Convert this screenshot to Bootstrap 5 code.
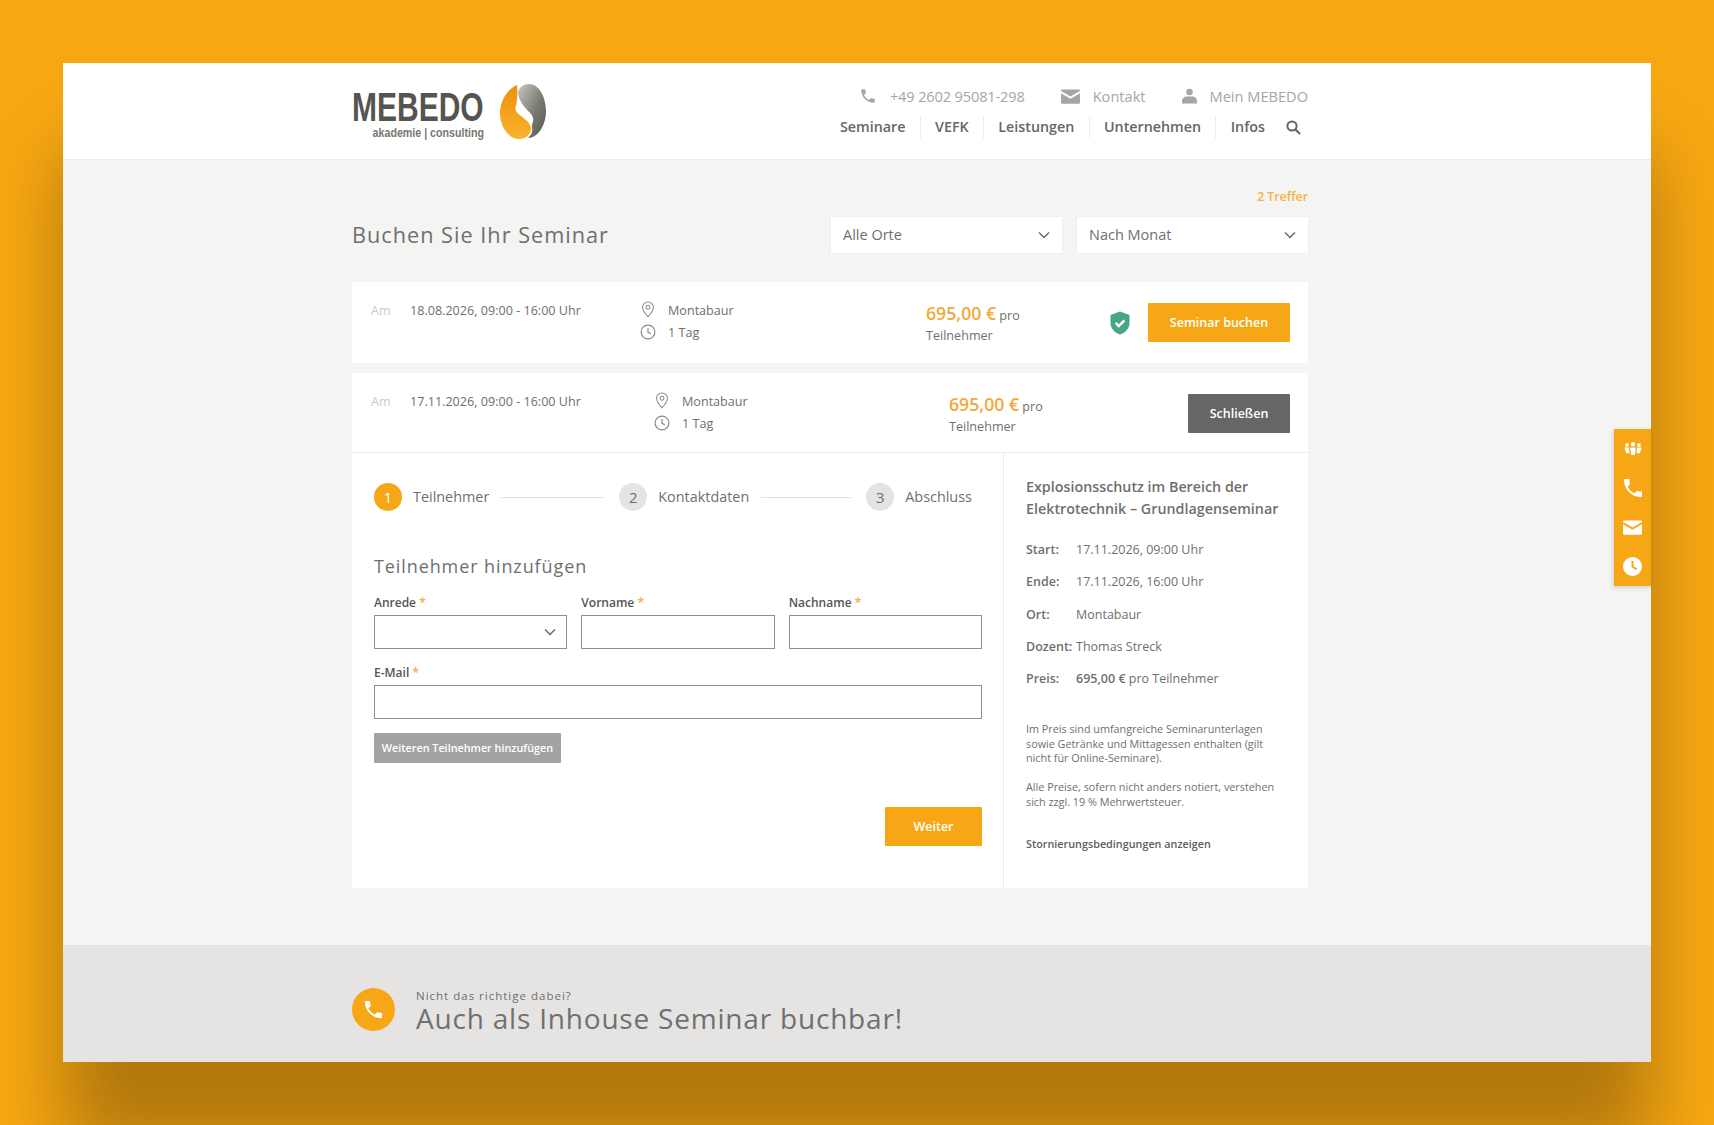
<!DOCTYPE html>
<html lang="de">
<head>
  <meta charset="UTF-8" />
  <meta name="viewport" content="width=device-width, initial-scale=1.0"/>
  <title>Buchen Sie Ihr Seminar</title>
  <link href="https://cdn.jsdelivr.net/npm/bootstrap@5.3.3/dist/css/bootstrap.min.css" rel="stylesheet">
  <style>
    body { background: #f7a712; font-family: "Open Sans", sans-serif; color: #6f6f6f; height: 1125px; overflow: hidden; padding: 63px; }
    .win { position: relative; height: 999px; background: #f4f4f3; box-shadow: 0 90px 70px rgba(0,0,0,.28); }
    .inner { width: 956px; margin-left: 289px; }

    .site-head { height: 97px; background: #fff; border-bottom: 1px solid #ececec; }
    .logo-text { width: 132px; flex-shrink: 0; padding-top: 10px; }
    .logo-word { font-family: "Liberation Sans", sans-serif; font-weight: 700; font-size: 40px; line-height: 29px; color: #55554f; height: 29px; transform: scaleX(.75); transform-origin: left center; white-space: nowrap; }
    .logo-sub { font-family: "Liberation Sans", sans-serif; font-weight: 700; font-size: 13px; line-height: 14px; color: #77776f; margin-top: 4px; white-space: nowrap; transform: scaleX(.82); transform-origin: right center; justify-content: flex-end; }
    .top-links { font-size: 14.6px; color: #a6a6a6; line-height: 20px; gap: 36px; padding-top: 23px; }
    .top-links svg { fill: #a6a6a6; display: block; }
    .top-links > span { gap: 13px; }
    .tel-text { letter-spacing: -.15px; }
    .main-nav { font-size: 14.3px; font-weight: 600; color: #666; margin-top: 10px; line-height: 22px; }
    .main-nav span { padding: 0 14.3px; border-right: 1px solid #ececec; }
    .main-nav span.last { border-right: 0; padding-right: 21px; }
    .main-nav svg { stroke: #666; fill: none; display: block; margin-right: 7px; }

    .hits { color: #f2b344; font-size: 12.3px; font-weight: 600; line-height: 18px; padding-top: 28px; text-align: right; }
    .page-title { font-size: 21.7px; font-weight: 400; letter-spacing: 1px; color: #6f6f6f; margin: 0; }
    .filter-box { width: 231px; height: 36px; border: 0; border-radius: 0; font-size: 14.5px; color: #6f6f6f; padding: 0 12px; background-color: #fff; background-position: right 11px center; background-size: 14px 10px; background-image: url("data:image/svg+xml,%3csvg xmlns='http://www.w3.org/2000/svg' viewBox='0 0 14 10'%3e%3cpath fill='none' stroke='%23666' stroke-width='1.4' d='M2 2.5l5 5 5-5'/%3e%3c/svg%3e"); box-shadow: 0 0 2px rgba(0,0,0,.06); }

    .date-row { background: #fff; font-size: 12.6px; line-height: 21.5px; padding: 18px 18px 0 19px; }
    .row-one { height: 81px; margin-top: 29px; margin-bottom: 10px; }
    .row-two { height: 80px; border-bottom: 1px solid #ececec; }
    .am-tag { width: 39px; color: #c9c9c9; }
    .row-one .date-col { width: 232px; }
    .row-two .date-col { width: 246px; }
    .row-one .place-col { width: 284px; }
    .row-two .place-col { width: 293px; }
    .place-col svg { stroke: #8a8a8a; fill: none; margin: 0 12px 0 -2px; vertical-align: -3px; }
    .price-col { width: 115px; padding-top: 4px; line-height: 19.5px; }
    .price-big { font-size: 17.7px; font-weight: 600; color: #f2a93b; }
    .act-wrap { margin-left: auto; align-self: flex-start; display: flex; align-items: center; gap: 18px; margin-top: 3px; }
    .btn-own { border-radius: 1px; border: 0; color: #fff; font-size: 12.5px; font-weight: 600; height: 39px; padding: 1px 0 0; }
    .btn-own:hover { color: #fff; }
    .btn-orange { background: #f7a715; }
    .btn-orange:hover { background: #f7a715; }
    .btn-dark-grey { background: #666; }
    .btn-dark-grey:hover { background: #666; }
    .btn-book { width: 142px; }
    .btn-close-row { width: 102px; }

    .detail-wrap { background: #fff; height: 435px; }
    .form-side { width: 652px; padding: 0 21px 0 22px; border-right: 1px solid #ececec; }
    .stepper { height: 28px; margin-top: 30px; font-size: 14.4px; }
    .step-dot { width: 28px; height: 28px; border-radius: 50%; background: #e4e4e4; color: #6f6f6f; font-size: 15px; line-height: 28px; text-align: center; flex-shrink: 0; }
    .step-dot.on { background: #f7a715; color: #fff; }
    .step-text { margin-left: 11px; white-space: nowrap; }
    .step-line { height: 1px; background: #e2e2e2; margin: 0 15px 0 12px; flex-shrink: 0; }
    .line-first { width: 103px; }
    .line-second { width: 90px; }
    .form-title { font-size: 18px; font-weight: 400; letter-spacing: .9px; line-height: 24px; margin: 0; padding-top: 43px; color: #6f6f6f; }
    .field-label { font-size: 12px; font-weight: 600; color: #555; line-height: 16px; margin: 0 0 4px; display: block; }
    .field-label b { color: #f2a93b; font-weight: 600; }
    .field-row { gap: 14px; padding-top: 17px; }
    .field-row > div { flex: 1 1 0; }
    .field-input { height: 34px; border: 1px solid #8f8f8f; border-radius: 0; padding: 0 10px; }
    select.field-input { background-position: right 9px center; background-size: 14px 10px; background-image: url("data:image/svg+xml,%3csvg xmlns='http://www.w3.org/2000/svg' viewBox='0 0 14 10'%3e%3cpath fill='none' stroke='%23666' stroke-width='1.4' d='M2 2.5l5 5 5-5'/%3e%3c/svg%3e"); }
    .btn-more { background: #a3a3a3; width: 187px; height: 30px; font-size: 10.8px; margin-top: 14px; display: block; }
    .btn-more:hover { background: #a3a3a3; }
    .btn-next { width: 97px; margin-top: 44px; }

    .info-side { padding: 23px 22px 0; flex: 1; min-width: 0; }
    .info-title { font-size: 14.3px; font-weight: 600; line-height: 22px; color: #6f6f6f; margin: 0 0 20px; }
    .info-line { font-size: 12.5px; line-height: 20px; margin-bottom: 12.3px; }
    .info-line strong { font-weight: 600; width: 50px; display: inline-block; }
    .info-small { font-size: 10.8px; line-height: 14.4px; margin: 0 0 15px; }
    .info-link { font-size: 10.8px; font-weight: 600; line-height: 16px; color: #5e5e5e; margin-top: 27px; }

    .site-foot { height: 117px; background: #e5e4e3; margin-top: 57px; }
    .foot-dot { width: 43px; height: 43px; border-radius: 50%; background: #f7a715; margin-top: 43px; }
    .foot-small { font-size: 11.5px; letter-spacing: 1px; line-height: 13px; padding-top: 44px; }
    .foot-big { font-size: 28px; letter-spacing: .8px; line-height: 32px; color: #707070; }

    .side-tabs { position: absolute; right: 0; top: 366px; width: 37px; height: 157px; background: #f7a715; box-shadow: -1px 2px 5px rgba(0,0,0,.15); }
    .tab-cell { height: 39.25px; }
    .side-tabs svg { fill: #fff; display: block; }
  </style>
</head>
<body>
  <svg width="0" height="0" class="d-block">
    <defs>
      <symbol id="ic-phone" viewBox="0 0 24 24"><path d="M6.62 10.79c1.44 2.83 3.76 5.14 6.59 6.59l2.2-2.2c.27-.27.67-.36 1.02-.24 1.12.37 2.33.57 3.57.57.55 0 1 .45 1 1V20c0 .55-.45 1-1 1-9.39 0-17-7.61-17-17 0-.55.45-1 1-1h3.5c.55 0 1 .45 1 1 0 1.25.2 2.45.57 3.57.11.35.03.74-.25 1.02l-2.2 2.2z"/></symbol>
      <symbol id="ic-mail" viewBox="0 0 20 15"><path d="M0 1.2C0 .5.5 0 1.2 0h17.6c.7 0 1.2.5 1.2 1.2v.6L10 7.6 0 1.8zM0 4l10 5.8L20 4v9.8c0 .7-.5 1.2-1.2 1.2H1.2C.5 15 0 14.500 0 13.800z"/></symbol>
      <symbol id="ic-user" viewBox="0 0 16 16"><circle cx="8" cy="3.700" r="3.500"/><path d="M0 16v-2.500C0 10.500 2.500 8.600 5 8.600h6c2.500 0 5 1.900 5 4.900V16z"/></symbol>
      <symbol id="ic-pin" viewBox="0 0 16 20"><path stroke-width="1.200" d="M8 1.200c-3.600 0-6.400 2.700-6.400 6.200C1.600 11.800 8 18.500 8 18.500s6.400-6.700 6.400-11.100c0-3.500-2.800-6.200-6.400-6.200z"/><circle cx="8" cy="7.400" r="2.300" stroke-width="1.200"/></symbol>
      <symbol id="ic-clock" viewBox="0 0 16 16"><circle cx="8" cy="8" r="6.900" stroke-width="1.200"/><path stroke-width="1.200" d="M8 4v4.300l2.800 1.500"/></symbol>
    </defs>
  </svg>

  <div class="win d-flex flex-column">
    <header class="site-head flex-shrink-0">
      <div class="inner d-flex justify-content-between">
        <div class="d-flex" style="padding-top: 20px">
          <div class="logo-text">
            <div class="logo-word">MEBEDO</div>
            <div class="logo-sub d-flex">akademie | consulting</div>
          </div>
          <svg width="66" height="70" viewBox="0 0 66 70" style="margin: -7px 0 0 6px" aria-hidden="true">
            <defs>
              <linearGradient id="lg-orange" x1="0" y1="0" x2="0" y2="1"><stop offset="0" stop-color="#ee8f0d"/><stop offset="1" stop-color="#f9b32c"/></linearGradient>
              <linearGradient id="lg-grey" x1="0" y1="0" x2="1" y2="1"><stop offset="0" stop-color="#c8c8c2"/><stop offset=".55" stop-color="#7b7b74"/><stop offset="1" stop-color="#55554f"/></linearGradient>
            </defs>
            <path fill="url(#lg-orange)" d="M27 9C16 14 10 26 10 37c0 14 9 26 19 26 7 0 12-5 12-10 0-6-5-9-10-13-4-3-7-6-5-10 1-6 2-13 1-21z"/>
            <path fill="url(#lg-grey)" d="M28 16c1-5 6-8 11-8 10 0 17 13 17 27 0 14-8 27-18 27 3-3 5-6 4-10-1-4 2-6 1-10-1-5-6-7-10-13-2-3-5-8-5-13z"/>
          </svg>
        </div>
        <div>
          <div class="top-links d-flex justify-content-end align-items-center">
            <span class="d-flex align-items-center"><svg width="18" height="18"><use href="#ic-phone"/></svg><span class="tel-text">+49 2602 95081-298</span></span>
            <span class="d-flex align-items-center"><svg width="19" height="15"><use href="#ic-mail"/></svg>Kontakt</span>
            <span class="d-flex align-items-center"><svg width="15" height="16"><use href="#ic-user"/></svg>Mein MEBEDO</span>
          </div>
          <nav class="main-nav d-flex justify-content-end align-items-center">
            <span>Seminare</span><span>VEFK</span><span>Leistungen</span><span>Unternehmen</span><span class="last">Infos</span>
            <svg width="15" height="15" viewBox="0 0 15 15"><circle cx="6" cy="6" r="4.600" stroke-width="2"/><path d="M9.500 9.500l4.500 4.500" stroke-width="2.200"/></svg>
          </nav>
        </div>
      </div>
    </header>

    <main class="flex-grow-1">
      <div class="inner">
        <div class="hits">2 Treffer</div>
        <div class="d-flex justify-content-between align-items-center mt-2" style="padding-top: 3px">
          <h1 class="page-title">Buchen Sie Ihr Seminar</h1>
          <div class="d-flex" style="gap: 15px">
            <select class="form-select filter-box"><option>Alle Orte</option></select>
            <select class="form-select filter-box"><option>Nach Monat</option></select>
          </div>
        </div>

        <div class="date-row row-one d-flex">
          <div class="am-tag">Am</div>
          <div class="date-col">18.08.2026, 09:00 - 16:00 Uhr</div>
          <div class="place-col">
            <div><svg width="16" height="17"><use href="#ic-pin"/></svg>Montabaur</div>
            <div><svg width="16" height="16"><use href="#ic-clock"/></svg>1 Tag</div>
          </div>
          <div class="price-col"><span class="price-big">695,00 €</span> pro<br>Teilnehmer</div>
          <div class="act-wrap">
            <svg width="20" height="24" viewBox="0 0 20 24"><path fill="#46a585" d="M10 .5l9.500 3.400v8c0 5.500-4 9.500-9.500 11.600C4.500 21.400.5 17.400.5 11.900v-8z"/><path fill="none" stroke="#fff" stroke-width="2.400" d="M5.600 11.800l3.200 3.200 5.600-5.600"/></svg>
            <button type="button" class="btn btn-own btn-orange btn-book">Seminar buchen</button>
          </div>
        </div>

        <div class="date-row row-two d-flex">
          <div class="am-tag">Am</div>
          <div class="date-col">17.11.2026, 09:00 - 16:00 Uhr</div>
          <div class="place-col">
            <div><svg width="16" height="17"><use href="#ic-pin"/></svg>Montabaur</div>
            <div><svg width="16" height="16"><use href="#ic-clock"/></svg>1 Tag</div>
          </div>
          <div class="price-col"><span class="price-big">695,00 €</span> pro<br>Teilnehmer</div>
          <div class="act-wrap">
            <button type="button" class="btn btn-own btn-dark-grey btn-close-row">Schließen</button>
          </div>
        </div>

        <div class="detail-wrap d-flex">
          <div class="form-side flex-shrink-0">
            <div class="stepper d-flex align-items-center">
              <div class="step-dot on">1</div><div class="step-text">Teilnehmer</div><div class="step-line line-first"></div>
              <div class="step-dot">2</div><div class="step-text">Kontaktdaten</div><div class="step-line line-second"></div>
              <div class="step-dot">3</div><div class="step-text">Abschluss</div>
            </div>
            <h2 class="form-title">Teilnehmer hinzufügen</h2>
            <div class="field-row d-flex">
              <div><label class="field-label">Anrede <b>*</b></label><select class="form-select field-input"><option></option></select></div>
              <div><label class="field-label">Vorname <b>*</b></label><input type="text" class="form-control field-input"></div>
              <div><label class="field-label">Nachname <b>*</b></label><input type="text" class="form-control field-input"></div>
            </div>
            <div style="padding-top: 16px">
              <label class="field-label">E-Mail <b>*</b></label>
              <input type="email" class="form-control field-input">
            </div>
            <button type="button" class="btn btn-own btn-more">Weiteren Teilnehmer hinzufügen</button>
            <div class="text-end"><button type="button" class="btn btn-own btn-orange btn-next">Weiter</button></div>
          </div>
          <div class="info-side">
            <h3 class="info-title">Explosionsschutz im Bereich der Elektrotechnik – Grundlagenseminar</h3>
            <div class="info-line"><strong>Start:</strong>17.11.2026, 09:00 Uhr</div>
            <div class="info-line"><strong>Ende:</strong>17.11.2026, 16:00 Uhr</div>
            <div class="info-line"><strong>Ort:</strong>Montabaur</div>
            <div class="info-line"><strong>Dozent:</strong>Thomas Streck</div>
            <div class="info-line"><strong>Preis:</strong><span class="fw-semibold">695,00 €</span> pro Teilnehmer</div>
            <p class="info-small" style="margin-top: 33px">Im Preis sind umfangreiche Seminarunterlagen sowie Getränke und Mittagessen enthalten (gilt nicht für Online-Seminare).</p>
            <p class="info-small">Alle Preise, sofern nicht anders notiert, verstehen sich zzgl. 19 % Mehrwertsteuer.</p>
            <div class="info-link">Stornierungsbedingungen anzeigen</div>
          </div>
        </div>
      </div>

      <footer class="site-foot">
        <div class="inner d-flex">
          <div class="foot-dot d-flex align-items-center justify-content-center flex-shrink-0">
            <svg width="23" height="23" fill="#fff"><use href="#ic-phone"/></svg>
          </div>
          <div style="margin-left: 21px">
            <div class="foot-small">Nicht das richtige dabei?</div>
            <div class="foot-big">Auch als Inhouse Seminar buchbar!</div>
          </div>
        </div>
      </footer>
    </main>

    <aside class="side-tabs">
      <div class="tab-cell d-flex align-items-center justify-content-center">
        <svg width="18" height="13" viewBox="0 0 18 13"><circle cx="9" cy="2.200" r="2.200"/><circle cx="3" cy="3" r="1.900"/><circle cx="15" cy="3" r="1.900"/><path d="M6.200 5.400h5.600l-.9 7.600H7.100zM.4 5.600h4.500l.6 5.600H2.200zM13.100 5.600h4.500l-1.800 5.600h-3.300z"/></svg>
      </div>
      <div class="tab-cell d-flex align-items-center justify-content-center"><svg width="24" height="24"><use href="#ic-phone"/></svg></div>
      <div class="tab-cell d-flex align-items-center justify-content-center"><svg width="19" height="15"><use href="#ic-mail"/></svg></div>
      <div class="tab-cell d-flex align-items-center justify-content-center">
        <svg width="19" height="19" viewBox="0 0 19 19"><path fill-rule="evenodd" d="M9.500 0a9.500 9.500 0 1 1 0 19 9.500 9.500 0 0 1 0-19zM8.500 4v6.300l4.700 2.800 1-1.600-3.700-2.200V4z"/></svg>
      </div>
    </aside>
  </div>

  <script src="https://cdn.jsdelivr.net/npm/bootstrap@5.3.3/dist/js/bootstrap.bundle.min.js"></script>
</body>
</html>
